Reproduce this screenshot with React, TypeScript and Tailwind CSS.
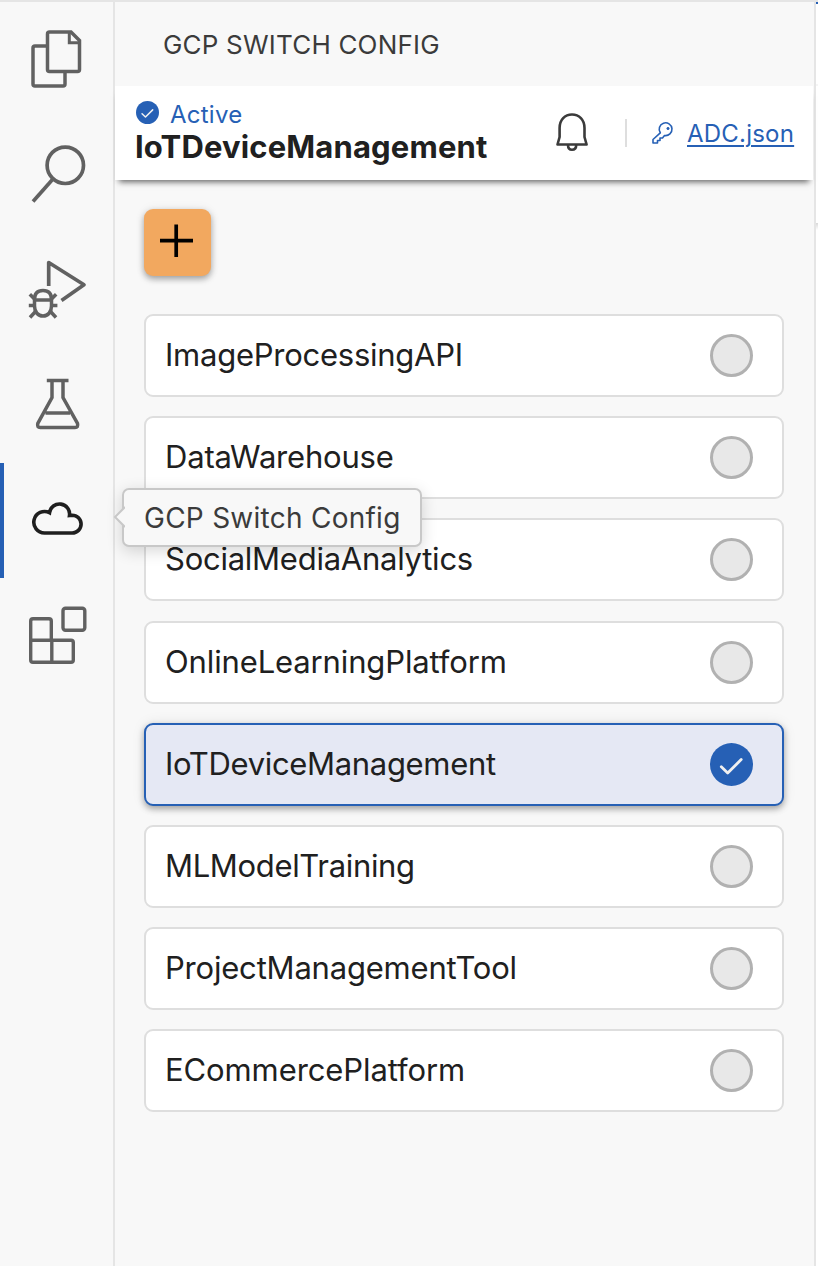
import React from "react";

const projects: { name: string; tracking: string }[] = [
  { name: "ImageProcessingAPI", tracking: "tracking-[-0.25px]" },
  { name: "DataWarehouse", tracking: "tracking-[-0.2px]" },
  { name: "SocialMediaAnalytics", tracking: "tracking-[-0.25px]" },
  { name: "OnlineLearningPlatform", tracking: "tracking-[-0.13px]" },
  { name: "IoTDeviceManagement", tracking: "tracking-[-0.33px]" },
  { name: "MLModelTraining", tracking: "tracking-[-0.33px]" },
  { name: "ProjectManagementTool", tracking: "tracking-[-0.2px]" },
  { name: "ECommercePlatform", tracking: "tracking-[-0.1px]" },
];

const active = "IoTDeviceManagement";

function ActivityItem({ label, selected, children }: { label: string; selected?: boolean; children: React.ReactNode }) {
  return (
    <button aria-label={label} className={selected ? "flex h-[115px] w-full border-l-4 border-[#2660b5] text-[#1f1f1f]" : "flex h-[115px] w-full border-l-4 border-transparent text-[#616161]"}>
      <svg viewBox="4 0 109 115" className="h-[115px] w-[109px]" fill="none" stroke="currentColor" strokeWidth="4">
        {children}
      </svg>
    </button>
  );
}

function ActivityBar() {
  return (
    <nav className="flex w-[115px] shrink-0 flex-col border-r-2 border-[#e5e5e5] pt-px">
      <ActivityItem label="Explorer">
        <g transform="translate(0 -1)">
          <path d="M47 44H35q-2 0-2 2v36q0 2 2 2h28q2 0 2-2V70" strokeWidth="3.500" />
          <path d="M49.500 30H71l8.500 8.500V67.500q0 2-2 2h-28q-2 0-2-2v-35.500q0-2 2-2z" strokeWidth="3.500" />
          <path d="M69.300 31V40.800H79.500" strokeWidth="3" />
        </g>
      </ActivityItem>
      <ActivityItem label="Search">
        <circle cx="65.300" cy="47.300" r="18.200" strokeWidth="3.700" />
        <path d="M52.500 61.500L33 83.500" strokeWidth="3.700" />
      </ActivityItem>
      <ActivityItem label="Run and Debug">
        <g transform="translate(0 -1)">
          <path d="M48.700 54V30.500L84 52.800L61.500 68.500" strokeWidth="3.700" strokeLinejoin="round" />
          <g strokeWidth="3.500">
            <path d="M34.500 67.500C34.500 61 38 58.500 43 58.500S51.500 61 51.500 67.500V74C51.500 80 48 84 43 84S34.500 80 34.500 74Z" />
            <path d="M34.500 68H51.500M34.500 67L29.800 62.200M51.500 67L56.200 62.200M34 73.500H28.800M52 73.500H57.400M35.500 79.500L30 85.500M50.500 79.500L56 85.500" />
          </g>
        </g>
      </ActivityItem>
      <ActivityItem label="Testing">
        <path d="M46.800 32.500H68.500M52 33V49.500L37.800 75.500q-1 4 2.500 4H75q3.500 0 2.500-4L63 49.500V33M45.500 65H70" strokeWidth="3.500" />
      </ActivityItem>
      <ActivityItem label="GCP Switch Config" selected>
        <path d="M44.500 70H72.200A8.900 8.900 0 0 0 72.200 52.200L69.500 52.500A10.090 10.090 0 0 0 49.500 49.700A10.750 10.750 0 1 0 44.500 70Z" strokeWidth="3.600" />
      </ActivityItem>
      <ActivityItem label="Extensions">
        <path d="M33 40.800H49q2.300 0 2.300 2.300V62.200H71q2.300 0 2.300 2.300V82q0 2.300-2.300 2.300H33q-2.300 0-2.300-2.300V43q0-2.300 2.300-2.300zM31 62.200H52M51.800 62V84" strokeWidth="3.400" />
        <rect x="63" y="30.200" width="21.800" height="22" rx="2.500" strokeWidth="3.400" />
      </ActivityItem>
    </nav>
  );
}

function CheckBadge({ className }: { className: string }) {
  return (
    <svg viewBox="0 0 43 43" className={className} fill="none">
      <circle cx="21.500" cy="21.500" r="21.500" fill="#2660b5" />
      <path d="M11.300 23.700L17.700 29.900L31.200 16.600" stroke="#f0f0f0" strokeWidth="2.800" strokeLinecap="round" strokeLinejoin="round" />
    </svg>
  );
}

function ProjectRow({ name, tracking }: { name: string; tracking: string }) {
  const on = name === active;
  return (
    <div className={on
      ? "flex h-[83px] items-center justify-between rounded-[9px] border-2 border-[#2660b5] bg-[#e5e8f4] pr-[29px] pl-[19px] shadow-[0_3px_6px_rgba(0,0,0,0.32),0_0_14px_rgba(0,0,0,0.08)]"
      : "flex h-[83px] items-center justify-between rounded-[9px] border-2 border-[#dedede] bg-white pr-[29px] pl-[19px]"}>
      <span className={`pb-px text-[31px] leading-[38px] whitespace-nowrap text-[#202020] ${tracking}`}>{name}</span>
      {on ? <CheckBadge className="size-[43px] shrink-0" /> : <span className="size-[43px] shrink-0 rounded-full border-3 border-[#b1b1b1] bg-[#e8e8e8]" />}
    </div>
  );
}

export default function App() {
  return (
    <div className="flex h-[1266px] w-[818px] overflow-hidden border-t-2 border-[#e5e5e5] bg-[#f8f8f8] font-['Inter',sans-serif]">
      <ActivityBar />
      <main className="relative flex w-[699px] shrink-0 flex-col">
        <h1 className="flex h-[84px] shrink-0 items-center pl-[48px] text-[26px] tracking-[0.2px] whitespace-nowrap text-[#3b3b3b]">GCP SWITCH CONFIG</h1>
        <header className="flex h-[94px] w-[698px] shrink-0 bg-white pl-[20px] shadow-[0_6px_6px_-4px_rgba(0,0,0,0.6)]">
          <div className="flex w-[417px] flex-col pt-[14px]">
            <div className="flex h-[28px] items-center gap-[11px]">
              <CheckBadge className="mb-[3px] ml-px size-[23px]" />
              <span className="pt-[2px] text-[24px] leading-[28px] tracking-[0.25px] text-[#2660b5]">Active</span>
            </div>
            <strong className="text-[31px] leading-[38px] font-bold tracking-[0.15px] whitespace-nowrap text-[#202020]">IoTDeviceManagement</strong>
          </div>
          <svg viewBox="552 86 76 94" className="h-[94px] w-[76px] shrink-0" fill="none" stroke="#3b3b3b" strokeWidth="2.600">
            <path d="M557.500 144.500L559.600 137V128C559.600 119.500 565 114.500 572 114.500S584.500 119.500 584.500 128V137L586.600 144.500Z" strokeLinejoin="round" />
            <path d="M568 145C568 148 569.500 149.700 572 149.700S576.200 148 576.200 145" />
            <path d="M626 119V147" stroke="#dedede" strokeWidth="2" />
          </svg>
          <div className="flex items-center pt-[2px] pl-[23px] text-[#2660b5]">
            <svg viewBox="0 0 24 24" className="mr-[12px] mb-[2px] size-[24px]" fill="none" stroke="currentColor" strokeWidth="1.600" strokeLinejoin="round">
              <path d="M9.300 11.800L2 18.500V22H6.500V19.500H9V17H11.500L13.500 14.500A6.400 6.400 0 1 0 9.300 11.800Z" />
              <circle cx="17" cy="7.500" r="1.100" fill="currentColor" strokeWidth="1" />
            </svg>
            <a href="#" className="text-[24px] tracking-[0.22px] underline decoration-2 underline-offset-[3px]">ADC.json</a>
          </div>
        </header>
        <section className="flex flex-col pt-[29px] pl-[29px]">
          <button aria-label="Add configuration" className="flex size-[67px] items-center justify-center rounded-[9px] bg-[#f2a85f] shadow-[0_3px_6px_rgba(0,0,0,0.34),0_0_12px_rgba(0,0,0,0.06)]">
            <svg viewBox="0 0 67 67" className="size-[67px]" stroke="#000" strokeWidth="3.700"><path d="M16 31.700H49M32.200 15.500V48" /></svg>
          </button>
          <div className="mt-[38px] flex w-[640px] flex-col gap-[19.2px]">
            {projects.map((p) => <ProjectRow key={p.name} {...p} />)}
          </div>
        </section>
        <div role="tooltip" className="absolute top-[486px] left-[7px] flex h-[59px] w-[300px] items-center rounded-[7px] border-2 border-[#c8c8c8] bg-[#f8f8f8] pl-[20px] text-[28px] tracking-[0.26px] whitespace-nowrap text-[#3b3b3b] shadow-[0_4px_16px_rgba(0,0,0,0.16)]">
          <svg viewBox="0 0 12 22" className="absolute top-[16px] -left-[11px] h-[22px] w-[12px]"><path d="M12 1L2 11L12 21" fill="#f8f8f8" stroke="#c8c8c8" strokeWidth="2" /></svg>
          GCP Switch Config
        </div>
      </main>
      <aside className="flex w-[4px] shrink-0 flex-col border-l-2 border-[#e5e5e5] bg-white">
        <div className="h-[2px] bg-[#2660b5]" />
        <div className="h-[80px] bg-white" />
        <div className="h-[2px] bg-[#f5f5f5]" />
        <div className="h-[137px] bg-white" />
        <div className="h-[7px] bg-linear-to-b from-[#d8d8d8] to-white" />
      </aside>
    </div>
  );
}
